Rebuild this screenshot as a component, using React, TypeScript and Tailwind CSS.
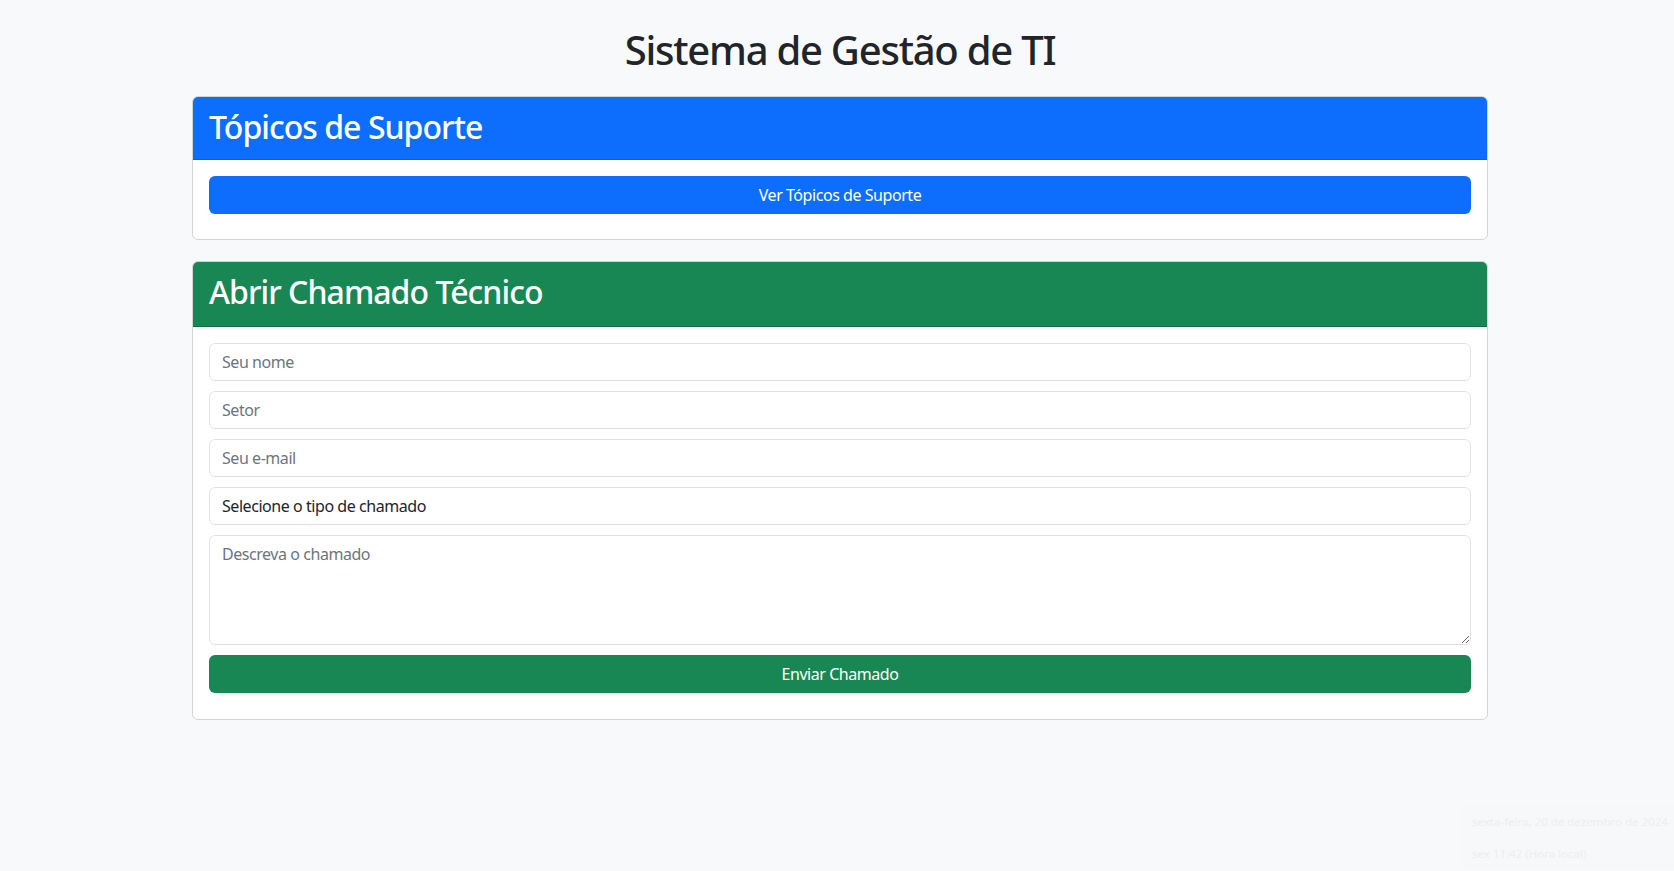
import { useState } from "react"

const inputClass =
  "block w-full h-[38px] rounded-[6px] border border-[#dee2e6] bg-white px-3 text-base text-[#212529] placeholder:text-[#6c757d] outline-none mb-[10px]"

const App = () => {
  const [form, setForm] = useState({ nome: "", setor: "", email: "", tipo: "", descricao: "" })

  const update = (name: string) => (e: { target: { value: string } }) =>
    setForm((prev) => ({ ...prev, [name]: e.target.value }))

  return (
    <div
      className="relative min-h-[871px] w-full bg-[#f8f9fa] text-[#212529] tracking-[-0.028em]"
      style={{ fontFamily: '"Segoe UI", "Noto Sans", "Liberation Sans", sans-serif' }}
    >
      <div className="flex justify-center pl-[6px]">
        <div className="w-[1296px] pt-[26px]">
          <h1 className="mb-[22px] text-center text-[40px] font-medium leading-[1.2] tracking-[-0.031em]">
            Sistema de Gestão de TI
          </h1>

          <div className="mb-[21px] overflow-hidden rounded-[6px] border border-[#d3d4d5] bg-white">
            <div className="border-b border-[#0b5ed7] bg-[#0d6efd] px-4 pt-[11px] pb-[13px]">
              <h2 className="text-[32px] font-medium leading-[1.2] tracking-[-0.03em] text-white">
                Tópicos de Suporte
              </h2>
            </div>
            <div className="p-4">
              <button
                type="button"
                className="mb-[9px] h-[38px] w-full rounded-[6px] bg-[#0d6efd] text-base text-white"
              >
                Ver Tópicos de Suporte
              </button>
            </div>
          </div>

          <div className="overflow-hidden rounded-[6px] border border-[#d3d4d5] bg-white">
            <div className="border-b border-[#146c43] bg-[#198754] px-4 pt-[11px] pb-[14px]">
              <h2 className="text-[32px] font-medium leading-[1.2] tracking-[-0.03em] text-white">
                Abrir Chamado Técnico
              </h2>
            </div>
            <form className="p-4" onSubmit={(e) => e.preventDefault()}>
              <input className={inputClass} placeholder="Seu nome" value={form.nome} onChange={update("nome")} />
              <input className={inputClass} placeholder="Setor" value={form.setor} onChange={update("setor")} />
              <input
                className={inputClass}
                type="email"
                placeholder="Seu e-mail"
                value={form.email}
                onChange={update("email")}
              />
              <select className={`${inputClass} appearance-none`} value={form.tipo} onChange={update("tipo")}>
                <option value="">Selecione o tipo de chamado</option>
                <option value="hardware">Hardware</option>
                <option value="software">Software</option>
                <option value="rede">Rede</option>
              </select>
              <textarea
                className="mb-[10px] block h-[110px] w-full resize-y rounded-[6px] border border-[#dee2e6] bg-white px-3 py-[6px] text-base text-[#212529] placeholder:text-[#6c757d] outline-none"
                placeholder="Descreva o chamado"
                value={form.descricao}
                onChange={update("descricao")}
              />
              <button
                type="submit"
                className="mb-[10px] h-[38px] w-full rounded-[6px] bg-[#198754] text-base text-white"
              >
                Enviar Chamado
              </button>
            </form>
          </div>
        </div>
      </div>

      <div className="absolute left-[1462px] right-0 top-[806px] whitespace-nowrap bg-[#f7f8f9] pl-[10px] text-[11.5px] leading-[32px] tracking-normal text-[#eceef0]">
        <div>sexta-feira, 20 de dezembro de 2024</div>
        <div>sex 11:42 (Hora local)</div>
      </div>
    </div>
  )
}

export default App
